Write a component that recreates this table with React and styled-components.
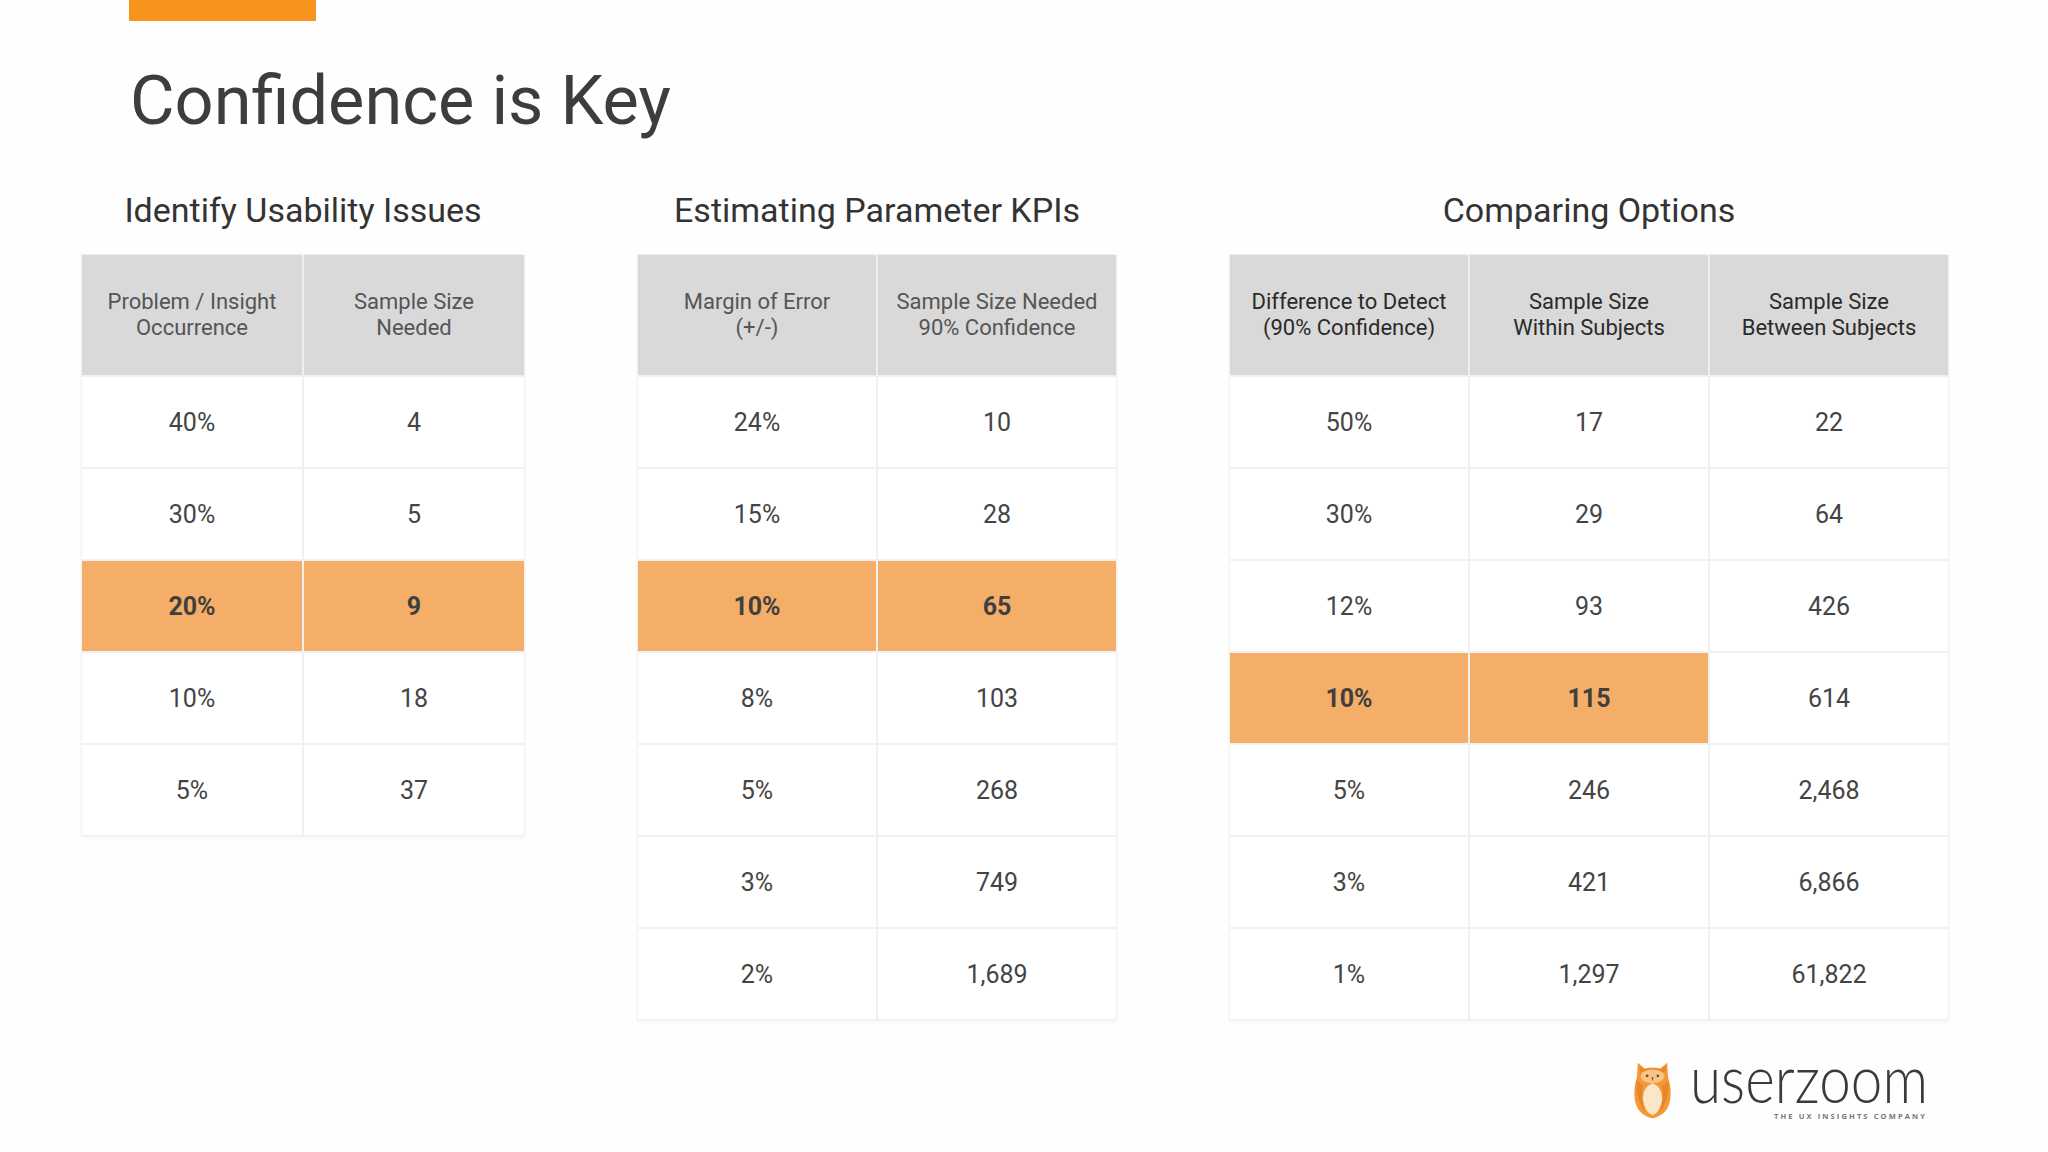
import React from "react"
import styled, { createGlobalStyle } from "styled-components"

const GlobalStyle = createGlobalStyle`
  html, body {
    margin: 0;
    padding: 0;
    background: #ffffff;
  }
  body {
    font-family: Roboto, "Liberation Sans", sans-serif;
  }
`

const Slide = styled.div`
  width: 2048px;
  height: 1152px;
  display: flex;
  flex-direction: column;
  background: #fefefe;
  overflow: hidden;
`

const Header = styled.header`
  padding-left: 129px;
`

const Bar = styled.div`
  width: 187px;
  height: 21px;
  background: #f7941d;
`

const Title = styled.h1`
  margin: 40px 0 0 1px;
  font-size: 68.5px;
  line-height: 80px;
  font-weight: 400;
  color: #3d3d3d;
`

const Sections = styled.div`
  display: flex;
  align-items: flex-start;
  gap: 112px;
  padding-left: 81px;
  margin-top: 49px;
`

const Section = styled.section`
  display: flex;
  flex-direction: column;
  align-items: center;
`

const Heading = styled.h2`
  margin: 0 0 24px;
  font-size: 34px;
  line-height: 40px;
  font-weight: 400;
  color: #333;
  white-space: nowrap;
`

const Grid = styled.div`
  display: grid;
  grid-template-columns: repeat(${(p) => p.$cols}, ${(p) => p.$colWidth}px);
  grid-auto-rows: 90px;
  grid-template-rows: 120px;
  gap: 2px;
  background: #f0f0f0;
  border: 1px solid #f0f0f0;
  box-shadow: 0 2px 3px rgba(0, 0, 0, 0.04);
`

const HeadCell = styled.div`
  display: flex;
  align-items: center;
  justify-content: center;
  text-align: center;
  background: #d9d9d9;
  font-size: 22px;
  line-height: 26px;
  color: ${(p) => (p.$dark ? "#2a2a2a" : "#555")};
`

const Cell = styled.div`
  display: flex;
  align-items: center;
  justify-content: center;
  background: ${(p) => (p.$hl ? "#f5ae68" : "#ffffff")};
  font-size: 25px;
  font-weight: ${(p) => (p.$hl ? 700 : 400)};
  color: ${(p) => (p.$hl ? "#3f3f3f" : "#444")};
`

const Footer = styled.footer`
  display: flex;
  justify-content: flex-end;
  align-items: flex-start;
  gap: 17px;
  padding-right: 119px;
  margin-top: 39px;
`

const tables = [
  {
    title: "Identify Usability Issues",
    colWidth: 220,
    dark: false,
    head: [
      ["Problem / Insight", "Occurrence"],
      ["Sample Size", "Needed"],
    ],
    rows: [
      [["40%", "4"], 0],
      [["30%", "5"], 0],
      [["20%", "9"], 2],
      [["10%", "18"], 0],
      [["5%", "37"], 0],
    ],
  },
  {
    title: "Estimating Parameter KPIs",
    colWidth: 238,
    dark: false,
    head: [
      ["Margin of Error", "(+/-)"],
      ["Sample Size Needed", "90% Confidence"],
    ],
    rows: [
      [["24%", "10"], 0],
      [["15%", "28"], 0],
      [["10%", "65"], 2],
      [["8%", "103"], 0],
      [["5%", "268"], 0],
      [["3%", "749"], 0],
      [["2%", "1,689"], 0],
    ],
  },
  {
    title: "Comparing Options",
    colWidth: 238,
    dark: true,
    head: [
      ["Difference to Detect", "(90% Confidence)"],
      ["Sample Size", "Within Subjects"],
      ["Sample Size", "Between Subjects"],
    ],
    rows: [
      [["50%", "17", "22"], 0],
      [["30%", "29", "64"], 0],
      [["12%", "93", "426"], 0],
      [["10%", "115", "614"], 2],
      [["5%", "246", "2,468"], 0],
      [["3%", "421", "6,866"], 0],
      [["1%", "1,297", "61,822"], 0],
    ],
  },
]

const Owl = () => (
  <svg width="39" height="62" viewBox="0 0 40 62">
    <path
      d="M5 3 L12 9 Q20 7 28 9 L35 3 L36 18 Q40 30 38 42 Q35 57 20 60 Q5 57 2 42 Q0 30 4 18 Z"
      fill="#f29a36"
    />
    <path d="M6 6 L12 10 Q20 8 28 10 L34 6 L32 13 Q20 8 8 13 Z" fill="#e8862a" />
    <ellipse cx="20" cy="17" rx="12" ry="7" fill="#f8c48a" />
    <circle cx="14.5" cy="16.5" r="1.4" fill="#6b4a2a" />
    <circle cx="25.5" cy="16.5" r="1.4" fill="#6b4a2a" />
    <path d="M18.8 18 L21.2 18 L20 22 Z" fill="#8a5a2a" />
    <path d="M4 22 Q2 40 13 55 Q8 40 10 26 Z" fill="#e8862a" />
    <path d="M36 22 Q38 40 27 55 Q32 40 30 26 Z" fill="#e8862a" />
    <path d="M20 24 Q30 28 30 40 Q28 54 20 57 Q12 54 10 40 Q10 28 20 24 Z" fill="#fce6c8" />
  </svg>
)

const Wordmark = () => (
  <svg width="240" height="66" viewBox="0 0 240 66" overflow="visible">
    <text
      x="1"
      y="44"
      fontFamily="Lato, 'Open Sans', sans-serif"
      fontWeight="300"
      fontSize="67"
      fill="#3a3a3a"
      textLength="238"
      lengthAdjust="spacingAndGlyphs"
    >
      userzoom
    </text>
    <text
      x="85"
      y="60"
      fontFamily="'Open Sans', 'Liberation Sans', sans-serif"
      fontWeight="700"
      fontSize="7.5"
      fill="#777"
      textLength="151"
      lengthAdjust="spacing"
    >
      THE UX INSIGHTS COMPANY
    </text>
  </svg>
)

const DataTable = ({ t }) => (
  <Section>
    <Heading>{t.title}</Heading>
    <Grid $cols={t.head.length} $colWidth={t.colWidth}>
      {t.head.map((h, i) => (
        <HeadCell key={"h" + i} $dark={t.dark}>
          {h[0]}
          <br />
          {h[1]}
        </HeadCell>
      ))}
      {t.rows.map(([cells, hl], r) =>
        cells.map((c, i) => (
          <Cell key={r + "-" + i} $hl={i < hl}>
            {c}
          </Cell>
        ))
      )}
    </Grid>
  </Section>
)

const App = () => {
  return (
    <>
      <GlobalStyle />
      <Slide>
        <Header>
          <Bar />
          <Title>Confidence is Key</Title>
        </Header>
        <Sections>
          {tables.map((t) => (
            <DataTable key={t.title} t={t} />
          ))}
        </Sections>
        <Footer>
          <Owl />
          <Wordmark />
        </Footer>
      </Slide>
    </>
  )
}

export default App
